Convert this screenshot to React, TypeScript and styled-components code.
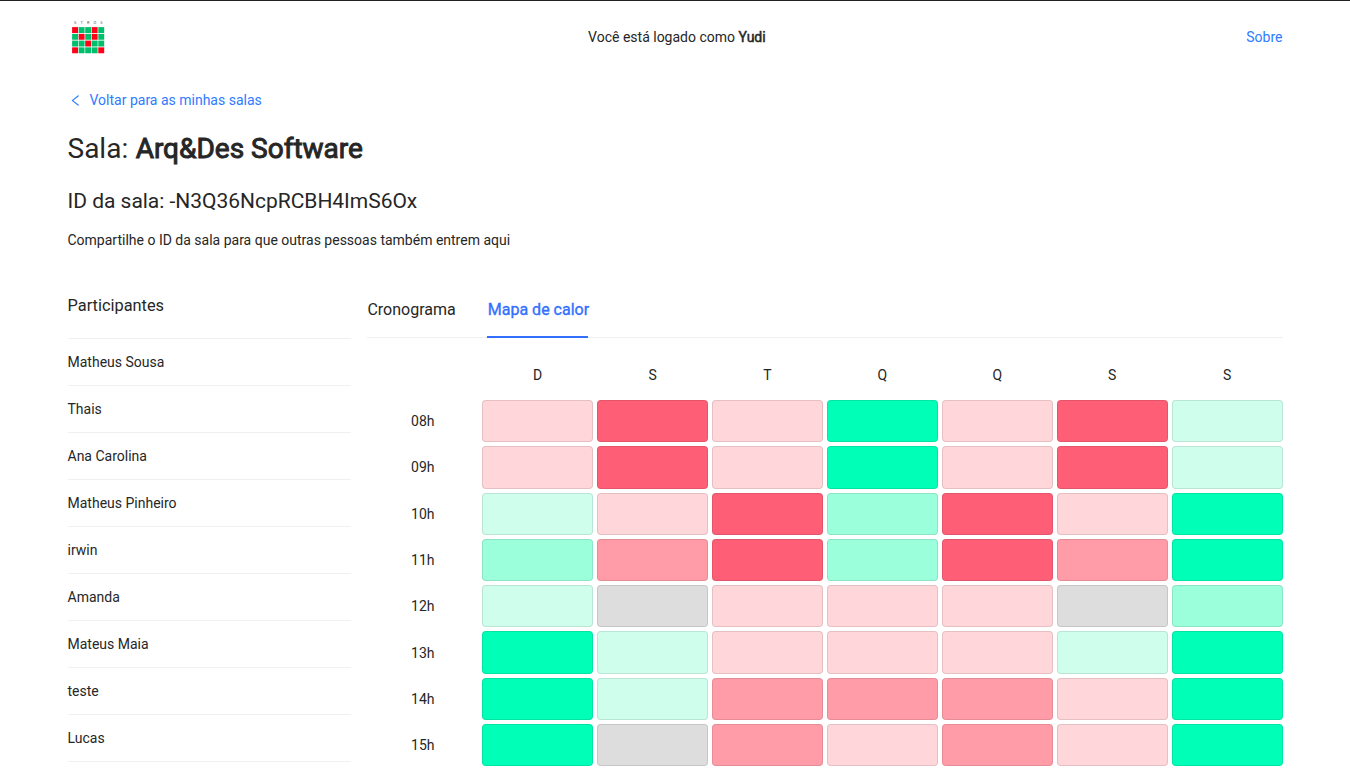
import React from 'react';
import styled, { createGlobalStyle } from 'styled-components';

const GlobalStyle = createGlobalStyle`
  *, *::before, *::after { box-sizing: border-box; }
  body {
    margin: 0;
    background: #fff;
    color: #262626;
    font-family: Roboto, sans-serif;
    font-size: 14px;
    line-height: 22px;
    overflow: hidden;
  }
  h1, h2, h3, p, ul { margin: 0; padding: 0; font-weight: 400; }
`;

const Page = styled.div`
  height: 768px;
  overflow: hidden;
  border-top: 1px solid #202124;
  padding: 0 5%;
`;

const Header = styled.header`
  display: flex;
  justify-content: space-between;
  align-items: center;
  height: 72px;
`;

const Logo = styled.svg`
  display: block;
  width: 40px;
  height: 40px;
`;

const Strong = styled.span<{ $stroke: number }>`
  -webkit-text-stroke: ${p => p.$stroke}px currentColor;
`;

const Link = styled.a`
  color: #2f7bff;
  text-decoration: none;
  cursor: pointer;
`;

const BackLink = styled(Link)`
  display: flex;
  align-items: center;
  gap: 7px;
  margin-top: 16px;
`;

const RoomTitle = styled.h1`
  margin-top: 22px;
  font-size: 28px;
  line-height: 32px;
`;

const RoomName = styled(Strong)`
  margin-left: 0.5px;
`;

const RoomId = styled.h2`
  margin-top: 23px;
  font-size: 21px;
  line-height: 26px;
  letter-spacing: -0.02px;
`;

const Hint = styled.p`
  margin-top: 15px;
`;

const Content = styled.main`
  display: grid;
  grid-template-columns: 283.9px 1fr;
  gap: 16px;
  margin-top: 37px;
`;

const SideTitle = styled.h3`
  height: 51px;
  padding-top: 6px;
  border-bottom: 1px solid #f0f0f0;
  font-size: 16.38px;
  line-height: 24px;
`;

const Participant = styled.li`
  list-style: none;
  height: 47px;
  padding: 12px 0;
  border-bottom: 1px solid #f0f0f0;
`;

const Tabs = styled.nav`
  display: flex;
  gap: 31.5px;
  height: 50px;
  border-bottom: 1px solid #f0f0f0;
  font-size: 16px;
  line-height: 24px;
`;

const Tab = styled.div`
  height: 50px;
  padding-top: 10px;
`;

const ActiveTab = styled(Tab)`
  position: relative;
  padding-left: 0.6px;
  color: #3370ff;
  -webkit-text-stroke: 0.35px currentColor;

  &::after {
    content: '';
    position: absolute;
    left: 0;
    bottom: 0;
    width: 101px;
    height: 2px;
    background: #3370ff;
  }
`;

const HeatMap = styled.div`
  display: grid;
  grid-template-columns: repeat(8, 1fr);
  grid-auto-rows: 42.3px;
  gap: 4px;
  margin-top: 15.7px;
`;

const Label = styled.div`
  display: flex;
  align-items: center;
  justify-content: center;
`;

const Cell = styled.div<{ $color: string }>`
  border: 1px solid rgba(0, 0, 0, 0.1);
  border-radius: 4px;
  background: ${p => p.$color};
`;

const heat: Record<string, string> = {
  r: '#ffd6da',
  s: '#ff9ca8',
  R: '#ff5f76',
  g: '#cfffec',
  h: '#9bffdb',
  G: '#00ffb7',
  n: '#dddddd',
};

const days = ['D', 'S', 'T', 'Q', 'Q', 'S', 'S'];

const schedule: [string, string][] = [
  ['08h', 'rRrGrRg'],
  ['09h', 'rRrGrRg'],
  ['10h', 'grRhRrG'],
  ['11h', 'hsRhRsG'],
  ['12h', 'gnrrrnh'],
  ['13h', 'GgrrrgG'],
  ['14h', 'GgsssrG'],
  ['15h', 'GnsrsrG'],
];

const participants = [
  'Matheus Sousa', 'Thais', 'Ana Carolina', 'Matheus Pinheiro', 'irwin',
  'Amanda', 'Mateus Maia', 'teste', 'Lucas',
];

const logoRows = ['RGGRG', 'GRGRG', 'GGRGG', 'RGGGR'];

function LogoMark() {
  return (
    <Logo viewBox="0 0 40 40">
      {'STROS'.split('').map((letter, i) => (
        <text key={i} x={7.2 + i * 6.55} y={7.2} fontSize={4} textAnchor="middle" fill="#555">
          {letter}
        </text>
      ))}
      {logoRows.map((row, y) =>
        row.split('').map((c, x) => (
          <rect
            key={`${x}-${y}`}
            x={4.1 + x * 6.55}
            y={10.1 + y * 6.75}
            width={5.9}
            height={5.9}
            fill={c === 'R' ? '#ff0019' : '#00bf6c'}
          />
        )),
      )}
    </Logo>
  );
}

export default function App() {
  return (
    <Page>
      <GlobalStyle />
      <Header>
        <LogoMark />
        <span>Você está logado como <Strong $stroke={0.5}>Yudi</Strong></span>
        <Link>Sobre</Link>
      </Header>
      <BackLink>
        <svg width="15" height="15" viewBox="0 0 1024 1024" fill="currentColor">
          <path d="M724 218.3V141c0-6.7-7.7-10.4-12.9-6.3L260.3 486.8a31.86 31.86 0 000 50.3l450.8 352.1c5.3 4.1 12.9.4 12.9-6.3v-77.3c0-4.9-2.3-9.6-6.1-12.6l-360-281 360-281.1c3.8-3 6.1-7.7 6.1-12.6z" />
        </svg>
        Voltar para as minhas salas
      </BackLink>
      <RoomTitle>Sala: <RoomName $stroke={0.95}>Arq&amp;Des Software</RoomName></RoomTitle>
      <RoomId>ID da sala: -N3Q36NcpRCBH4ImS6Ox</RoomId>
      <Hint>Compartilhe o ID da sala para que outras pessoas também entrem aqui</Hint>
      <Content>
        <aside>
          <SideTitle>Participantes</SideTitle>
          <ul>
            {participants.map(name => <Participant key={name}>{name}</Participant>)}
          </ul>
        </aside>
        <section>
          <Tabs>
            <Tab>Cronograma</Tab>
            <ActiveTab>Mapa de calor</ActiveTab>
          </Tabs>
          <HeatMap>
            <Label />
            {days.map((day, i) => <Label key={i}>{day}</Label>)}
            {schedule.map(([hour, levels]) => (
              <React.Fragment key={hour}>
                <Label>{hour}</Label>
                {levels.split('').map((level, i) => <Cell key={i} $color={heat[level]} />)}
              </React.Fragment>
            ))}
          </HeatMap>
        </section>
      </Content>
    </Page>
  );
}
